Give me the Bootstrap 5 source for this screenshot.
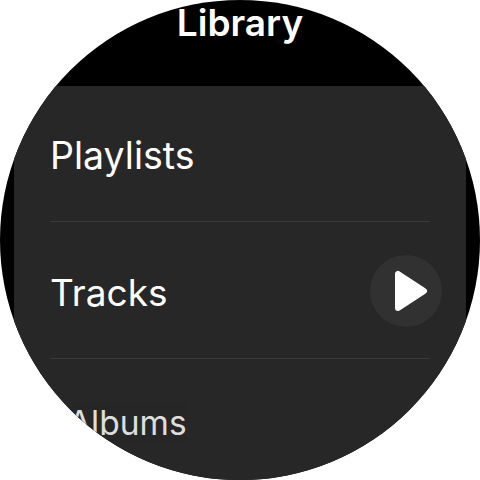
<!DOCTYPE html>
<html lang="en">
<head>
<meta charset="utf-8">
<title>Library</title>
<link href="https://cdn.jsdelivr.net/npm/bootstrap@5.3.0/dist/css/bootstrap.min.css" rel="stylesheet">
<style>
html, body { margin: 0; width: 480px; height: 480px; background: #fff; overflow: hidden; }
.watch { width: 480px; height: 480px; border-radius: 50%; background: #000; overflow: hidden; color: #fff; font-family: Inter, Roboto, sans-serif; }
.lib-title { height: 86px; font-size: 37px; font-weight: 600; line-height: 46px; text-align: center; margin: 0; }
.panel { width: 452px; margin-left: 14px; background: #272727; border-radius: 30px 30px 0 0; height: 394px; }
.entry { height: 137px; margin: 0 36px; padding-top: 4px; font-size: 37.500px; line-height: 1; border-bottom: 1px solid #3a3a3a; }
.entry:first-child { height: 136px; }
.entry-track { font-size: 37px; }
.entry-last { border-bottom: 0; font-size: 33.500px; opacity: .85; padding: 0 0 7px 18px; }
.play-btn { width: 72px; height: 72px; border-radius: 50%; background: #313131; margin-right: -12px; margin-top: -2px; }
</style>
</head>
<body>
<div class="watch">
  <h1 class="lib-title">Library</h1>
  <div class="panel">
    <div class="entry d-flex align-items-center">Playlists</div>
    <div class="entry entry-track d-flex align-items-center justify-content-between">
      <span>Tracks</span>
      <div class="play-btn d-flex align-items-center justify-content-center">
        <svg width="72" height="72" viewBox="0 0 72 72"><path d="M28 19v34l26-17z" fill="#fff" stroke="#fff" stroke-width="6" stroke-linejoin="round"/></svg>
      </div>
    </div>
    <div class="entry entry-last d-flex align-items-center">Albums</div>
  </div>
</div>
<script src="https://cdn.jsdelivr.net/npm/bootstrap@5.3.0/dist/js/bootstrap.bundle.min.js"></script>
</body>
</html>
